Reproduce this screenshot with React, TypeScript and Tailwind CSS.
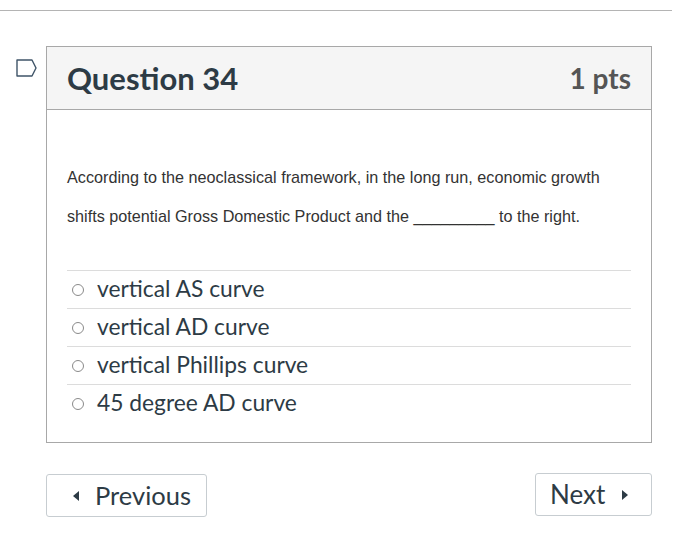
import React from 'react';

const options = ['vertical AS curve', 'vertical AD curve', 'vertical Phillips curve', '45 degree AD curve'];

function Flag() {
  return (
    <svg width="22" height="18" viewBox="0 0 22 18" className="block">
      <path d="M1 1 H16 L20 9 L16 17 H1 Z" fill="none" stroke="#3f5468" strokeWidth="1.4" strokeLinejoin="round" />
    </svg>
  );
}

export default function App() {
  return (
    <div className="w-[682px] h-[551px] bg-white pt-[10px]" style={{ fontFamily: 'Lato, "Noto Sans", sans-serif' }}>
      <div className="w-[672px] h-px bg-[#b4b4b4]" />

      <div className="flex mt-[35px]">
        <div className="w-[46px] pl-[16px] pt-[13px]">
          <Flag />
        </div>

        <div className="w-[606px]">
          {/* Question box */}
          <div className="border border-[#a8a8a8]">
            <div className="h-[63px] bg-[#f5f5f5] border-b border-[#a8a8a8] px-[20px] flex items-center justify-between">
              <h2 className="text-[31px] font-bold text-[#2d3b45] leading-none">Question 34</h2>
              <span className="text-[28px] font-bold text-[#555555] leading-none">1 pts</span>
            </div>

            <div className="px-[20px] pt-[48px] pb-[20px]">
              <p
                className="text-[16.2px] leading-[39px] text-[#333333]"
                style={{ fontFamily: '"Liberation Sans", Arial, sans-serif' }}
              >
                According to the neoclassical framework, in the long run, economic growth shifts potential Gross Domestic Product and the _________ to the right.
              </p>

              <div className="mt-[34px]">
                {options.map((opt) => (
                  <label key={opt} className="h-[38px] border-t border-[#dcdcdc] flex items-center pl-[5px]">
                    <span className="w-[12px] h-[12px] rounded-full border border-[#8a8a8a] bg-white" />
                    <span className="ml-[13px] -mt-[2px] text-[22.8px] text-[#2d3b45] leading-none">{opt}</span>
                  </label>
                ))}
              </div>
            </div>
          </div>

          {/* Nav buttons */}
          <div className="flex justify-between items-start mt-[31px]">
            <button className="h-[43px] w-[161px] border border-[#c7cdd1] rounded-[3px] bg-white flex items-center pl-[26px] text-[25.5px] text-[#2d3b45]">
              <span className="w-0 h-0 border-y-[5px] border-y-transparent border-r-[6px] border-r-[#2d3b45]" />
              <span className="ml-[16px]">Previous</span>
            </button>
            <button className="h-[43px] w-[117px] -mt-px border border-[#c7cdd1] rounded-[3px] bg-white flex items-center pl-[14px] text-[26px] text-[#2d3b45]">
              <span>Next</span>
              <span className="ml-[17px] w-0 h-0 border-y-[5px] border-y-transparent border-l-[6px] border-l-[#2d3b45]" />
            </button>
          </div>
        </div>
      </div>
    </div>
  );
}
